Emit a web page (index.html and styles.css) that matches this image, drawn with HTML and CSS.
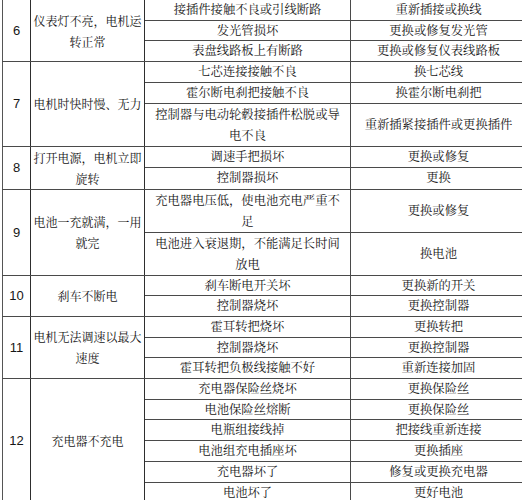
FILE: index.html
```html
<!DOCTYPE html>
<html lang="zh">
<head>
<meta charset="utf-8">
<title>电动车故障排除表</title>
<link rel="stylesheet" href="styles.css">
</head>
<body>
<table class="faults">
  <colgroup>
    <col class="c-num">
    <col class="c-fault">
    <col class="c-cause">
    <col class="c-fix">
  </colgroup>
  <tbody>
    <tr><td class="num" rowspan="3">6</td><td class="fault" rowspan="3">仪表灯不亮，电机运<br>转正常</td><td class="cause">接插件接触不良或引线断路</td><td class="fix">重新插接或换线</td></tr>
    <tr><td class="cause">发光管损坏</td><td class="fix">更换或修复发光管</td></tr>
    <tr><td class="cause">表盘线路板上有断路</td><td class="fix">更换或修复仪表线路板</td></tr>

    <tr><td class="num" rowspan="3">7</td><td class="fault" rowspan="3">电机时快时慢、无力</td><td class="cause">七芯连接接触不良</td><td class="fix">换七芯线</td></tr>
    <tr><td class="cause">霍尔断电刹把接触不良</td><td class="fix">换霍尔断电刹把</td></tr>
    <tr><td class="cause dbl">控制器与电动轮毂接插件松脱或导<br>电不良</td><td class="fix">重新插紧接插件或更换插件</td></tr>

    <tr><td class="num" rowspan="2">8</td><td class="fault" rowspan="2">打开电源，电机立即<br>旋转</td><td class="cause">调速手把损坏</td><td class="fix">更换或修复</td></tr>
    <tr><td class="cause">控制器损坏</td><td class="fix">更换</td></tr>

    <tr><td class="num" rowspan="2">9</td><td class="fault" rowspan="2">电池一充就满，一用<br>就完</td><td class="cause dbl">充电器电压低，使电池充电严重不<br>足</td><td class="fix">更换或修复</td></tr>
    <tr><td class="cause dbl">电池进入衰退期，不能满足长时间<br>放电</td><td class="fix">换电池</td></tr>

    <tr><td class="num" rowspan="2">10</td><td class="fault" rowspan="2">刹车不断电</td><td class="cause">刹车断电开关坏</td><td class="fix">更换新的开关</td></tr>
    <tr><td class="cause">控制器烧坏</td><td class="fix">更换控制器</td></tr>

    <tr><td class="num" rowspan="3">11</td><td class="fault" rowspan="3">电机无法调速以最大<br>速度</td><td class="cause">霍耳转把烧坏</td><td class="fix">更换转把</td></tr>
    <tr><td class="cause">控制器烧坏</td><td class="fix">更换控制器</td></tr>
    <tr><td class="cause">霍耳转把负极线接触不好</td><td class="fix">重新连接加固</td></tr>

    <tr><td class="num" rowspan="6">12</td><td class="fault" rowspan="6">充电器不充电</td><td class="cause">充电器保险丝烧坏</td><td class="fix">更换保险丝</td></tr>
    <tr><td class="cause">电池保险丝熔断</td><td class="fix">更换保险丝</td></tr>
    <tr><td class="cause">电瓶组接线掉</td><td class="fix">把接线重新连接</td></tr>
    <tr><td class="cause">电池组充电插座坏</td><td class="fix">更换插座</td></tr>
    <tr><td class="cause">充电器坏了</td><td class="fix">修复或更换充电器</td></tr>
    <tr><td class="cause">电池坏了</td><td class="fix">更好电池</td></tr>
  </tbody>
</table>
</body>
</html>
```

FILE: styles.css
```css
html, body {
  margin: 0;
  padding: 0;
  background: #ffffff;
  overflow: hidden;
}

.faults {
  border-collapse: collapse;
  table-layout: fixed;
  width: 524px;
  margin: -1px 0 0 2px;
  color: #161616;
  font-family: "Noto Serif CJK SC", "Noto Sans CJK SC", serif;
}

.c-num { width: 28px; }
.c-fault { width: 114px; }
.c-cause { width: 206px; }
.c-fix { width: 176px; }

.faults td {
  border: 1px solid #4a4a4a;
  padding: 0;
  text-align: center;
  vertical-align: middle;
  white-space: nowrap;
  overflow: hidden;
}

.faults .num {
  font-family: "Liberation Sans", Arial, sans-serif;
  font-size: 13px;
  border-left-color: #555555;
  border-right-color: #2e2e2e;
}

.faults .fault {
  font-size: 12px;
  line-height: 21px;
  border-right-color: #2e2e2e;
}

.faults .cause,
.faults .fix {
  font-size: 12.3px;
  line-height: 19.7px;
}

.faults .fix {
  border-left-color: #2e2e2e;
}

.faults .cause.dbl {
  line-height: 21px;
}
```
